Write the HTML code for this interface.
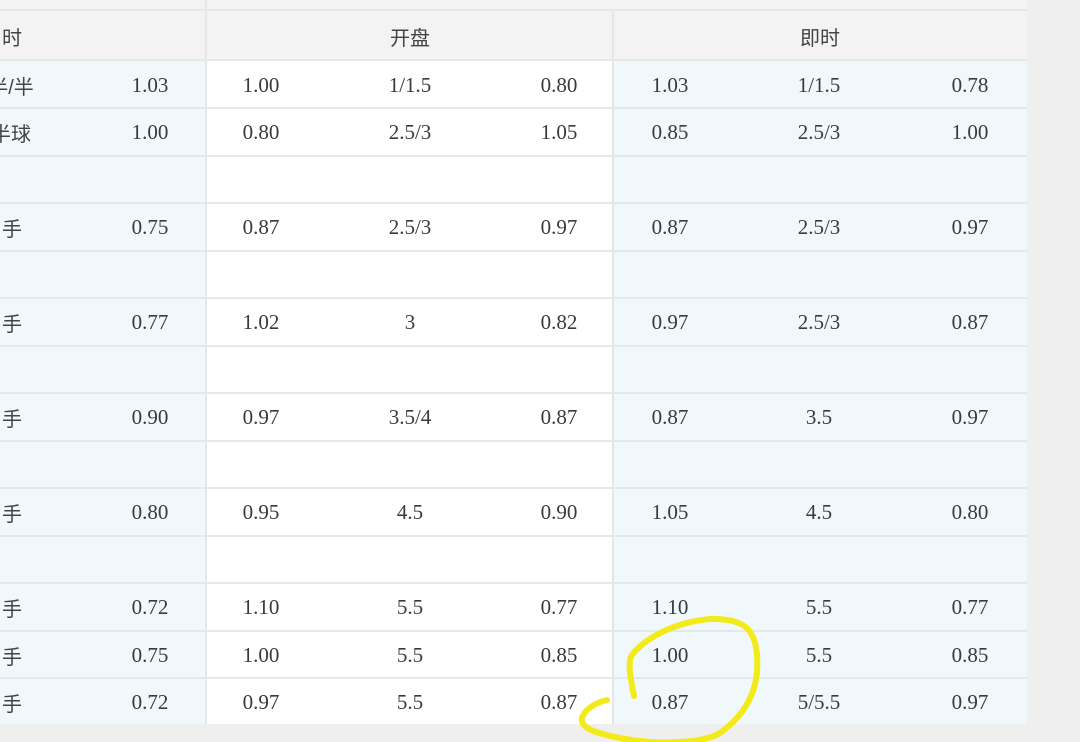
<!DOCTYPE html>
<html><head><meta charset="utf-8"><style>
body{margin:0;width:1080px;height:742px;background:#efefef;position:relative;overflow:hidden;font-family:"Liberation Serif",serif;}
.sec{position:absolute}
.t{position:absolute;font-size:21px;color:#3a3a3a;transform:translate(-50%,-44%);white-space:nowrap}
.c{font-family:"Liberation Sans","Noto Sans CJK SC",sans-serif;color:#444;font-size:20px}
.h{position:absolute;height:2px;background:#e4e8ea}
.v{position:absolute;width:2px;background:#e4e6e8}
</style></head><body>
<div class="sec" style="left:0;top:0;width:1027px;height:60px;background:#f3f3f3"></div>
<div class="sec" style="left:0;top:60px;width:205px;height:664px;background:#f1f8fc"></div>
<div class="sec" style="left:206px;top:60px;width:407px;height:664px;background:#fff"></div>
<div class="sec" style="left:614px;top:60px;width:413px;height:664px;background:#f1f8fc"></div>
<div class="v" style="left:205px;top:0;height:724px"></div>
<div class="v" style="left:612px;top:10px;height:714px"></div>
<div class="h" style="left:0;top:9px;width:1027px"></div>
<div class="h" style="left:0;top:59px;width:1027px"></div>
<div class="h" style="left:0;top:107px;width:1027px"></div>
<div class="h" style="left:0;top:155px;width:1027px"></div>
<div class="h" style="left:0;top:202px;width:1027px"></div>
<div class="h" style="left:0;top:250px;width:1027px"></div>
<div class="h" style="left:0;top:297px;width:1027px"></div>
<div class="h" style="left:0;top:345px;width:1027px"></div>
<div class="h" style="left:0;top:392px;width:1027px"></div>
<div class="h" style="left:0;top:440px;width:1027px"></div>
<div class="h" style="left:0;top:487px;width:1027px"></div>
<div class="h" style="left:0;top:535px;width:1027px"></div>
<div class="h" style="left:0;top:582px;width:1027px"></div>
<div class="h" style="left:0;top:630px;width:1027px"></div>
<div class="h" style="left:0;top:677px;width:1027px"></div>

<div class="t c" style="left:12px;top:35px">时</div>
<div class="t c" style="left:410px;top:35px">开盘</div>
<div class="t c" style="left:820px;top:35px">即时</div>

<div class="t c" style="left:11px;top:84px">半/半</div><div class="t" style="left:150px;top:84px">1.03</div><div class="t" style="left:261px;top:84px">1.00</div><div class="t" style="left:410px;top:84px">1/1.5</div><div class="t" style="left:559px;top:84px">0.80</div><div class="t" style="left:670px;top:84px">1.03</div><div class="t" style="left:819px;top:84px">1/1.5</div><div class="t" style="left:970px;top:84px">0.78</div>
<div class="t c" style="left:11px;top:131px">半球</div><div class="t" style="left:150px;top:131px">1.00</div><div class="t" style="left:261px;top:131px">0.80</div><div class="t" style="left:410px;top:131px">2.5/3</div><div class="t" style="left:559px;top:131px">1.05</div><div class="t" style="left:670px;top:131px">0.85</div><div class="t" style="left:819px;top:131px">2.5/3</div><div class="t" style="left:970px;top:131px">1.00</div>
<div class="t c" style="left:12px;top:226px">手</div><div class="t" style="left:150px;top:226px">0.75</div><div class="t" style="left:261px;top:226px">0.87</div><div class="t" style="left:410px;top:226px">2.5/3</div><div class="t" style="left:559px;top:226px">0.97</div><div class="t" style="left:670px;top:226px">0.87</div><div class="t" style="left:819px;top:226px">2.5/3</div><div class="t" style="left:970px;top:226px">0.97</div>
<div class="t c" style="left:12px;top:321px">手</div><div class="t" style="left:150px;top:321px">0.77</div><div class="t" style="left:261px;top:321px">1.02</div><div class="t" style="left:410px;top:321px">3</div><div class="t" style="left:559px;top:321px">0.82</div><div class="t" style="left:670px;top:321px">0.97</div><div class="t" style="left:819px;top:321px">2.5/3</div><div class="t" style="left:970px;top:321px">0.87</div>
<div class="t c" style="left:12px;top:416px">手</div><div class="t" style="left:150px;top:416px">0.90</div><div class="t" style="left:261px;top:416px">0.97</div><div class="t" style="left:410px;top:416px">3.5/4</div><div class="t" style="left:559px;top:416px">0.87</div><div class="t" style="left:670px;top:416px">0.87</div><div class="t" style="left:819px;top:416px">3.5</div><div class="t" style="left:970px;top:416px">0.97</div>
<div class="t c" style="left:12px;top:511px">手</div><div class="t" style="left:150px;top:511px">0.80</div><div class="t" style="left:261px;top:511px">0.95</div><div class="t" style="left:410px;top:511px">4.5</div><div class="t" style="left:559px;top:511px">0.90</div><div class="t" style="left:670px;top:511px">1.05</div><div class="t" style="left:819px;top:511px">4.5</div><div class="t" style="left:970px;top:511px">0.80</div>
<div class="t c" style="left:12px;top:606px">手</div><div class="t" style="left:150px;top:606px">0.72</div><div class="t" style="left:261px;top:606px">1.10</div><div class="t" style="left:410px;top:606px">5.5</div><div class="t" style="left:559px;top:606px">0.77</div><div class="t" style="left:670px;top:606px">1.10</div><div class="t" style="left:819px;top:606px">5.5</div><div class="t" style="left:970px;top:606px">0.77</div>
<div class="t c" style="left:12px;top:654px">手</div><div class="t" style="left:150px;top:654px">0.75</div><div class="t" style="left:261px;top:654px">1.00</div><div class="t" style="left:410px;top:654px">5.5</div><div class="t" style="left:559px;top:654px">0.85</div><div class="t" style="left:670px;top:654px">1.00</div><div class="t" style="left:819px;top:654px">5.5</div><div class="t" style="left:970px;top:654px">0.85</div>
<div class="t c" style="left:12px;top:701px">手</div><div class="t" style="left:150px;top:701px">0.72</div><div class="t" style="left:261px;top:701px">0.97</div><div class="t" style="left:410px;top:701px">5.5</div><div class="t" style="left:559px;top:701px">0.87</div><div class="t" style="left:670px;top:701px">0.87</div><div class="t" style="left:819px;top:701px">5/5.5</div><div class="t" style="left:970px;top:701px">0.97</div>

<svg width="1080" height="742" style="position:absolute;left:0;top:0">
<path d="M634,696 C631,680 627,662 632,655 C645,638 675,622 710,619 C745,618 755,630 757,655 C760,690 745,715 720,733 C700,745 650,744 620,738 C595,733 580,728 582,718 C585,708 598,702 607,700" fill="none" stroke="#f2ea1a" stroke-width="6" stroke-linecap="round"/>
</svg>
</body></html>
